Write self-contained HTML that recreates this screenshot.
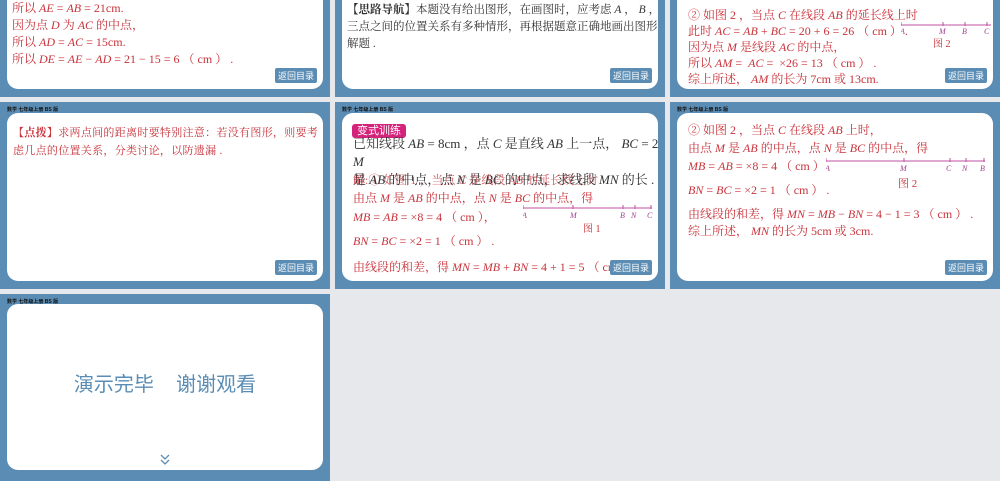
<!DOCTYPE html>
<html><head><meta charset="utf-8"><style>
*{margin:0;padding:0;box-sizing:border-box}
body{width:1000px;height:475px;background:#e6e8eb;position:relative;overflow:hidden;font-family:"Liberation Serif","Noto Serif CJK SC",serif}
.s{position:absolute;width:330px;height:187px;background:#5b8db4;overflow:hidden}
.h{position:absolute;left:7px;top:4px;font:bold 5px "Liberation Sans","Noto Sans CJK SC",sans-serif;color:#111}
.p{position:absolute;left:7px;top:11px;width:316px;height:168px;background:#fff;border-radius:11px;overflow:hidden}
.t{position:absolute;font-size:12px;line-height:17px;color:#c8323a;white-space:nowrap}
.l{position:absolute;font-size:12px;line-height:16px;color:#c8323a;white-space:nowrap}
.k{color:#333}
i{font-style:italic}
.b{position:absolute;right:6px;bottom:6px;background:#5b8db4;color:#fff;font:9px "Liberation Sans","Noto Sans CJK SC",sans-serif;padding:1px 3px;border-radius:2px}
.tag{display:inline-block;background:#d4237a;color:#fff;font:11px "Liberation Sans","Noto Sans CJK SC",sans-serif;padding:0 5px;border-radius:3px;line-height:14px}
svg{position:absolute}
</style></head><body>

<!-- row1 -->
<div class="s" style="left:0;top:-90px"><div class="p">
<div class="t" style="left:5px;top:79px">所以 <i>AE</i> = <i>AB</i> = 21cm.<br>因为点 <i>D</i> 为 <i>AC</i> 的中点，<br>所以 <i>AD</i> = <i>AC</i> = 15cm.<br>所以 <i>DE</i> = <i>AE</i> − <i>AD</i> = 21 − 15 = 6 （ cm ） .</div>
<div class="b">返回目录</div></div></div>

<div class="s" style="left:335px;top:-90px"><div class="p">
<div class="t k" style="left:5px;top:81px;font-size:11.5px"><b>【思路导航】</b>本题没有给出图形，在画图时，应考虑 <i>A</i> ， <i>B</i> ， <i>C</i><br>三点之间的位置关系有多种情形，再根据题意正确地画出图形<br>解题 .</div>
<div class="b">返回目录</div></div></div>

<div class="s" style="left:670px;top:-90px"><div class="p">
<div class="t" style="left:11px;top:86px;line-height:16px">② 如图 2 ，当点 <i>C</i> 在线段 <i>AB</i> 的延长线上时<br>此时 <i>AC</i> = <i>AB</i> + <i>BC</i> = 20 + 6 = 26 （ cm ） .<br>因为点 <i>M</i> 是线段 <i>AC</i> 的中点，<br>所以 <i>AM</i> = &nbsp;<i>AC</i> = &nbsp;×26 = 13 （ cm ） .<br>综上所述， <i>AM</i> 的长为 7cm 或 13cm.</div>
<svg style="left:224px;top:101px" width="100" height="30"><line x1="0" y1="3" x2="90" y2="3" stroke="#c050a0"/><g stroke="#c050a0"><line x1="0" y1="0" x2="0" y2="4"/><line x1="42" y1="0" x2="42" y2="4"/><line x1="64" y1="0" x2="64" y2="4"/><line x1="86" y1="0" x2="86" y2="4"/></g><g fill="#a04090" font-size="8" font-style="italic"><text x="-1" y="12">A</text><text x="38" y="12">M</text><text x="61" y="12">B</text><text x="83" y="12">C</text></g><text x="32" y="25" font-size="10" fill="#c8323a">图 2</text></svg>
<div class="b">返回目录</div></div></div>

<!-- row2 -->
<div class="s" style="left:0;top:102px"><div class="h">数学 七年级上册 BS 版</div><div class="p">
<div class="t" style="left:6px;top:11px;line-height:18px;font-size:11px;letter-spacing:0.3px">【<b>点拨</b>】求两点间的距离时要特别注意：若没有图形，则要考<br>虑几点的位置关系，分类讨论，以防遗漏 .</div>
<div class="b">返回目录</div></div></div>

<div class="s" style="left:335px;top:102px"><div class="h">数学 七年级上册 BS 版</div><div class="p">
<div style="position:absolute;left:10px;top:8px"><span class="tag">变式训练</span></div>
<div class="l k" style="left:11px;top:23px;font-size:13px">已知线段 <i>AB</i> = 8cm ，点 <i>C</i> 是直线 <i>AB</i> 上一点， <i>BC</i> = 2cm. 若点</div>
<div class="l k" style="left:11px;top:41px;font-size:13px"><i>M</i></div>
<div class="l" style="left:11px;top:59px;opacity:.8"><b>解</b>:① 如图 1 ，当点 <i>C</i> 在线段 <i>AB</i> 的延长线上时</div>
<div class="l k" style="left:11px;top:59px;font-size:13px">是 <i>AB</i> 的中点，点 <i>N</i> 是 <i>BC</i> 的中点，求线段 <i>MN</i> 的长 .</div>
<div class="l" style="left:11px;top:77px">由点 <i>M</i> 是 <i>AB</i> 的中点，点 <i>N</i> 是 <i>BC</i> 的中点，得</div>
<div class="l" style="left:11px;top:96px"><i>MB</i> = <i>AB</i> = ×8 = 4 （ cm ），</div>
<div class="l" style="left:11px;top:120px"><i>BN</i> = <i>BC</i> = ×2 = 1 （ cm ） .</div>
<div class="l" style="left:11px;top:146px">由线段的和差，得 <i>MN</i> = <i>MB</i> + <i>BN</i> = 4 + 1 = 5 （ cm ） .</div>
<svg style="left:181px;top:92px" width="130" height="40"><line x1="0" y1="3" x2="129" y2="3" stroke="#c050a0"/><g stroke="#c050a0"><line x1="0" y1="0" x2="0" y2="4"/><line x1="50" y1="0" x2="50" y2="4"/><line x1="100" y1="0" x2="100" y2="4"/><line x1="112" y1="0" x2="112" y2="4"/><line x1="128" y1="0" x2="128" y2="4"/></g><g fill="#a04090" font-size="8" font-style="italic"><text x="-1" y="13">A</text><text x="47" y="13">M</text><text x="97" y="13">B</text><text x="108" y="13">N</text><text x="124" y="13">C</text></g><text x="60" y="27" font-size="10" fill="#c8323a">图 1</text></svg>
<div class="b">返回目录</div></div></div>

<div class="s" style="left:670px;top:102px"><div class="h">数学 七年级上册 BS 版</div><div class="p">
<div class="l" style="left:11px;top:9px">② 如图 2 ，当点 <i>C</i> 在线段 <i>AB</i> 上时，</div>
<div class="l" style="left:11px;top:27px">由点 <i>M</i> 是 <i>AB</i> 的中点，点 <i>N</i> 是 <i>BC</i> 的中点，得</div>
<div class="l" style="left:11px;top:45px"><i>MB</i> = <i>AB</i> = ×8 = 4 （ cm ）</div>
<div class="l" style="left:11px;top:69px"><i>BN</i> = <i>BC</i> = ×2 = 1 （ cm ） .</div>
<div class="l" style="left:11px;top:93px">由线段的和差，得 <i>MN</i> = <i>MB</i> − <i>BN</i> = 4 − 1 = 3 （ cm ） .</div>
<div class="l" style="left:11px;top:110px">综上所述， <i>MN</i> 的长为 5cm 或 3cm.</div>
<div class="b">返回目录</div>
<svg style="left:149px;top:45px" width="165" height="40"><line x1="0" y1="3" x2="159" y2="3" stroke="#c050a0"/><g stroke="#c050a0"><line x1="0" y1="0" x2="0" y2="4"/><line x1="78" y1="0" x2="78" y2="4"/><line x1="124" y1="0" x2="124" y2="4"/><line x1="140" y1="0" x2="140" y2="4"/><line x1="158" y1="0" x2="158" y2="4"/></g><g fill="#a04090" font-size="8" font-style="italic"><text x="-1" y="13">A</text><text x="74" y="13">M</text><text x="120" y="13">C</text><text x="136" y="13">N</text><text x="154" y="13">B</text></g><text x="72" y="29" font-size="11" fill="#c8323a">图 2</text></svg>
</div></div>

<!-- row3 -->
<div class="s" style="left:0;top:294px"><div class="h">数学 七年级上册 BS 版</div><div class="p" style="top:10px;height:166px">
<div style="position:absolute;left:0;width:316px;top:64px;text-align:center;font:20px 'Liberation Sans','Noto Sans CJK SC',sans-serif;color:#5b8db4;white-space:nowrap">演示完毕&nbsp;&nbsp;&nbsp;&nbsp;谢谢观看</div>
<svg style="left:152px;top:150px" width="12" height="12"><path d="M2 1 L6 5 L10 1 M2 6 L6 10 L10 6" stroke="#5b8db4" stroke-width="1.3" fill="none"/></svg>
</div></div>

</body></html>
